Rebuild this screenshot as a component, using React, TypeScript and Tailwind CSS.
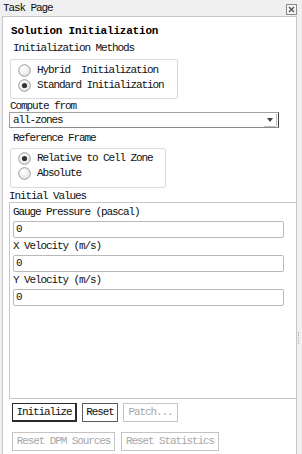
import React from 'react'

const mono = 'font-mono text-[11px] tracking-[-1.1px] text-[#111]'

function Radio({ checked, label }: { checked?: boolean; label: string }) {
  return (
    <div className="flex h-[15px] items-center">
      <svg width="13" height="13" viewBox="0 0 13 13" className="shrink-0">
        <defs>
          <radialGradient id="rg" cx="0.4" cy="0.35" r="0.7">
            <stop offset="0" stopColor="#ffffff" />
            <stop offset="1" stopColor="#e4e4e4" />
          </radialGradient>
        </defs>
        <circle cx="6.5" cy="6.5" r="5.8" fill="url(#rg)" stroke="#9a9a9a" strokeWidth="1" />
        {checked && <circle cx="6.5" cy="6.5" r="2.6" fill="#333" />}
      </svg>
      <span className={`${mono} ml-[6px] whitespace-pre leading-[15px]`}>{label}</span>
    </div>
  )
}

function Field({ label, value }: { label: string; value: string }) {
  return (
    <div className="mt-[1px]">
      <div className={`${mono} h-[14px] pl-[3px] leading-[14px]`}>{label}</div>
      <div className="mt-[2px] ml-[3px] flex h-[17px] w-[271px] items-center rounded-[2px] border border-[#b9b9b9] bg-white pl-[2px]">
        <span className={`${mono} leading-[15px]`}>{value}</span>
      </div>
    </div>
  )
}

function Btn({ label, w, variant }: { label: string; w: string; variant: 'default' | 'normal' | 'disabled' }) {
  const cls =
    variant === 'default'
      ? 'border-[#2a2a2a] border-r-[2px] border-b-[2px] text-[#111]'
      : variant === 'normal'
        ? 'border-[#5a5a5a] text-[#111]'
        : 'border-[#c4c4c4] text-[#a8a8a8]'
  return (
    <div className={`flex h-[19px] ${w} items-center justify-center border bg-white ${cls}`}>
      <span className="font-mono text-[11px] leading-[15px] tracking-[-1.1px]">{label}</span>
    </div>
  )
}

export default function App() {
  return (
    <div className="flex h-[454px] w-[302px] flex-col overflow-hidden bg-[#f0f0f0] font-mono">
      {/* title bar */}
      <div className="flex h-[16px] items-center justify-between pl-[3px] pr-[5px]">
        <span className={`${mono} leading-[16px]`}>Task Page</span>
        <svg width="11" height="11" viewBox="0 0 11 11" className="mt-[2px]">
          <rect x="0.5" y="0.5" width="10" height="10" fill="#f4f4f4" stroke="#8a8a8a" />
          <path d="M3 3 L8 8 M8 3 L3 8" stroke="#555" strokeWidth="1.4" />
        </svg>
      </div>

      <div className="flex min-h-0 flex-1">
        <div className="ml-[2px] flex w-[295px] flex-col border border-b-0 border-[#c6c6c6] bg-white">
          <div className="mt-[7px] h-[14px] pl-[8px] font-mono text-[11px] leading-[14px] font-bold tracking-[-0.2px] text-black">
            Solution Initialization
          </div>
          <div className={`${mono} mt-[3px] h-[14px] pl-[10px] leading-[14px]`}>Initialization Methods</div>

          <div className="mt-[4px] ml-[7px] w-[168px] rounded-[2px] border border-[#dadada] pt-[3px] pb-[5px] pl-[7px]">
            <Radio label="Hybrid  Initialization" />
            <Radio checked label="Standard Initialization" />
          </div>

          <div className={`${mono} mt-[1px] h-[12px] pl-[7px] leading-[12px]`}>Compute from</div>
          <div className="ml-[6px] flex h-[16px] w-[270px] items-center justify-between border border-t-[#a0a0a0] border-r-[#444] border-b-[#8a8a8a] border-l-[#a0a0a0] bg-white">
            <span className={`${mono} pl-[3px] leading-[14px]`}>all-zones</span>
            <svg width="14" height="14" viewBox="0 0 14 14" className="mr-[1px]">
              <path d="M4 5 L10 5 L7 9 Z" fill="#444" />
              <path d="M1 13.5 L13 13.5 M13.5 1 L13.5 13" stroke="#bdbdbd" />
            </svg>
          </div>

          <div className={`${mono} mt-[3px] h-[14px] pl-[10px] leading-[14px]`}>Reference Frame</div>
          <div className="mt-[3px] ml-[7px] w-[156px] rounded-[2px] border border-[#dadada] pt-[2px] pb-[6px] pl-[7px]">
            <Radio checked label="Relative to Cell Zone" />
            <Radio label="Absolute" />
          </div>

          <div className={`${mono} mt-[2px] h-[12px] pl-[6px] leading-[12px]`}>Initial Values</div>
          <div className="ml-[6px] flex h-[197px] flex-col border border-r-0 border-[#c6c6c6] pt-[1px]">
            <Field label="Gauge Pressure (pascal)" value="0" />
            <Field label="X Velocity (m/s)" value="0" />
            <Field label="Y Velocity (m/s)" value="0" />
          </div>

          <div className="mt-[4px] ml-[9px] flex gap-[5px]">
            <Btn label="Initialize" w="w-[65px]" variant="default" />
            <Btn label="Reset" w="w-[36px]" variant="normal" />
            <Btn label="Patch..." w="w-[55px]" variant="disabled" />
          </div>
          <div className="mt-[10px] ml-[9px] flex gap-[6px]">
            <Btn label="Reset DPM Sources" w="w-[103px]" variant="disabled" />
            <Btn label="Reset Statistics" w="w-[98px]" variant="disabled" />
          </div>
        </div>
        <div className="mt-[316px] ml-[1px] h-[12px] w-[2px] border-l border-dotted border-[#b0b0b0]" />
      </div>
    </div>
  )
}
